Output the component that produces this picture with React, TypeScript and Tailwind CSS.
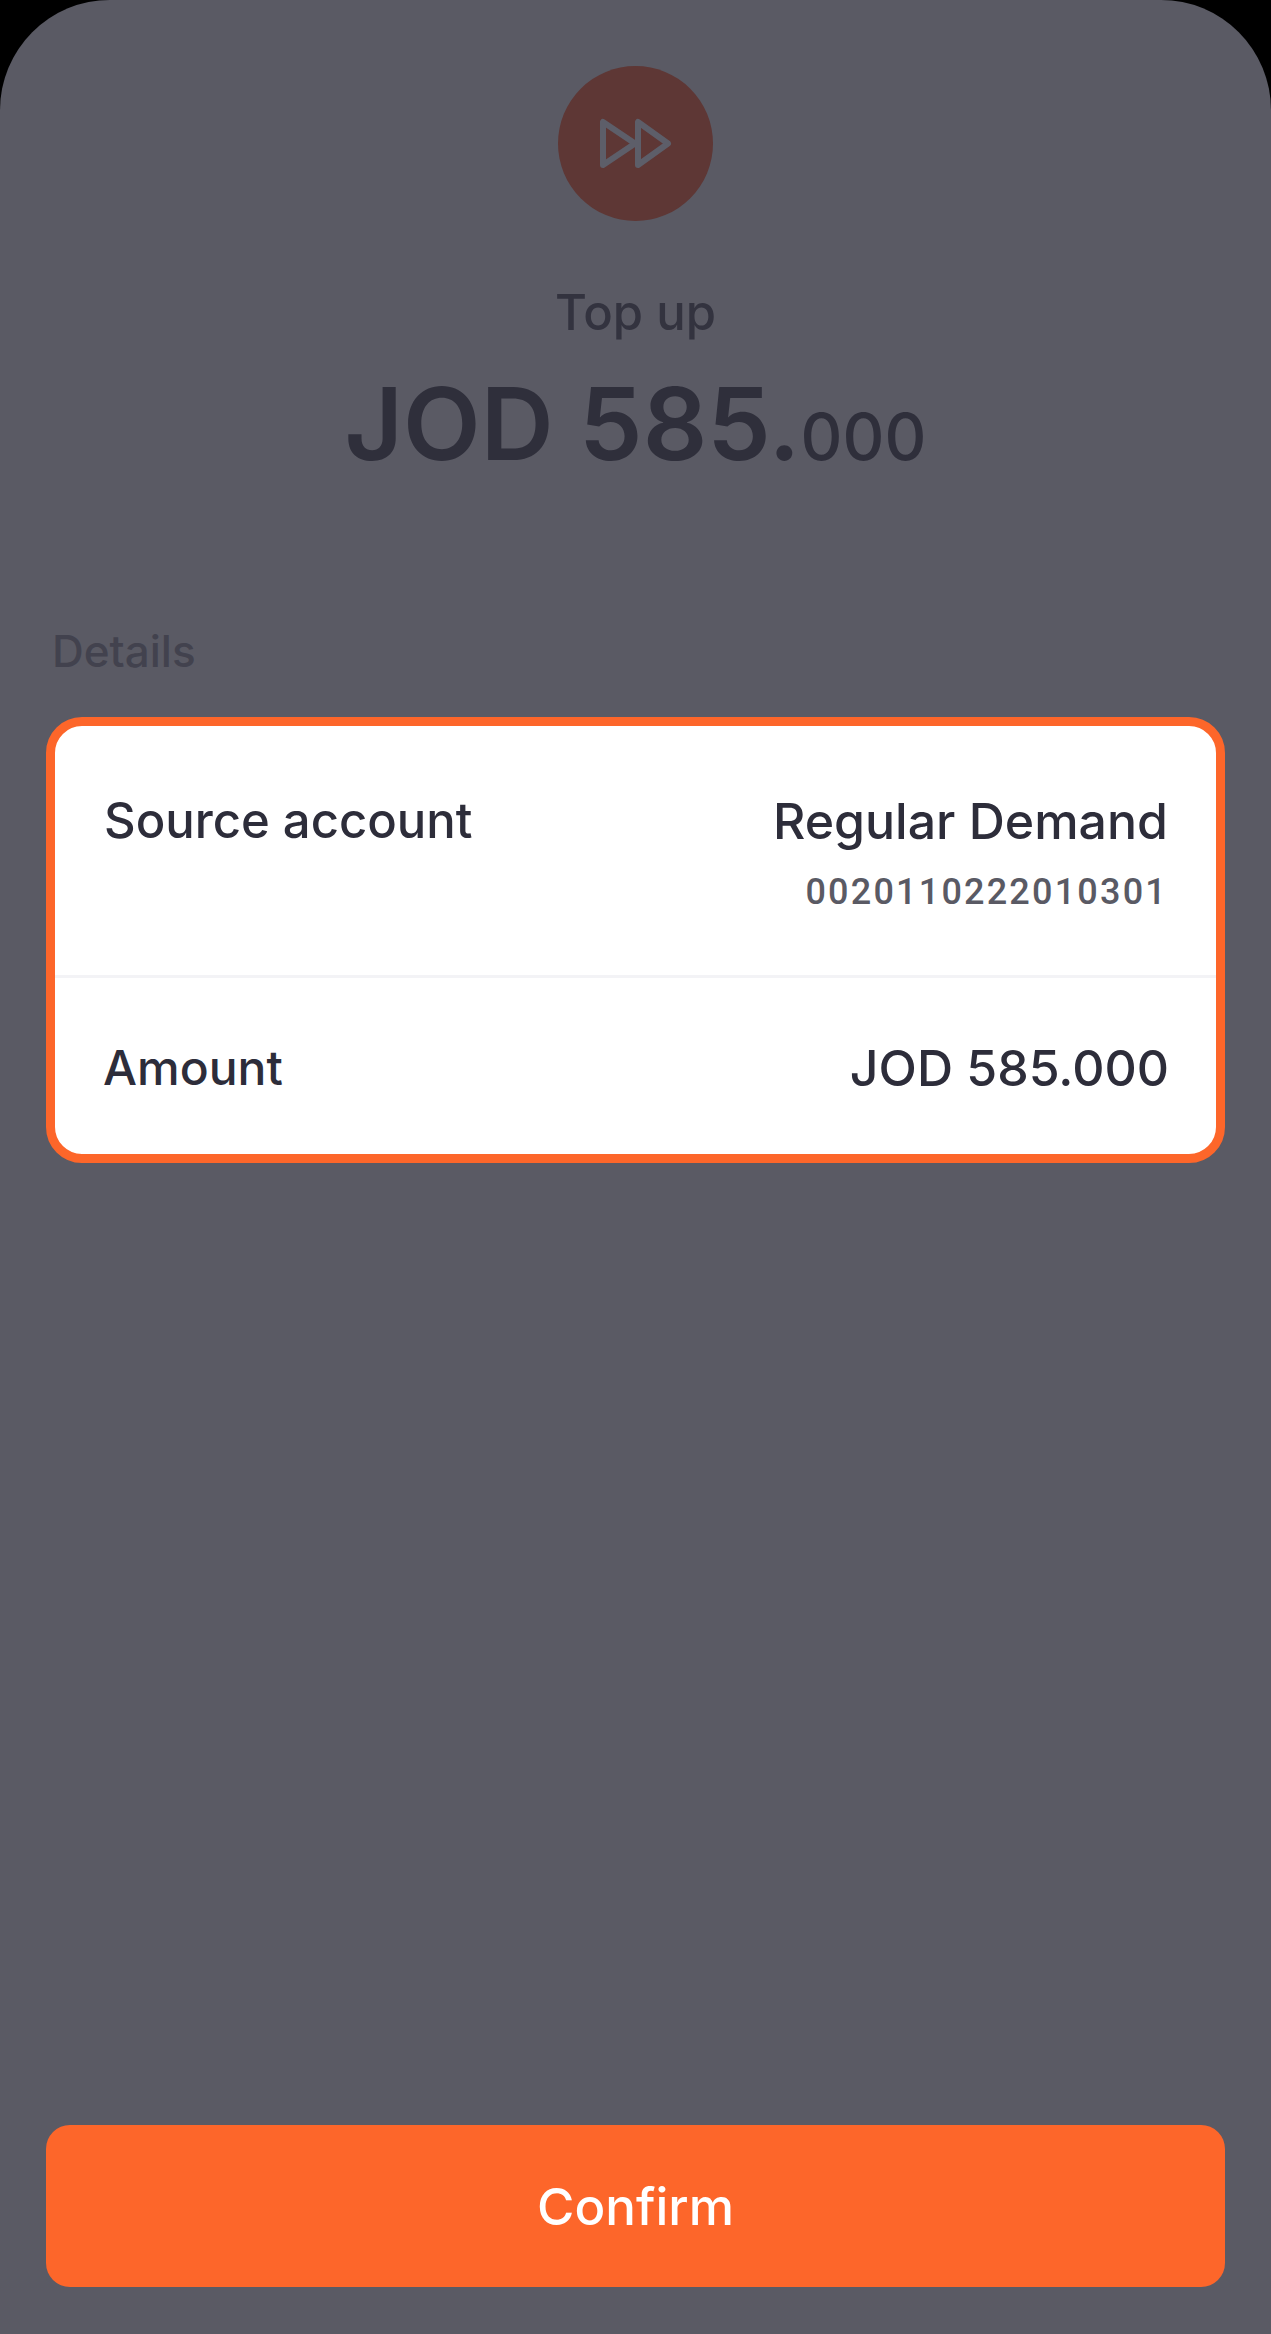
export default function App() {
  return (
    <div className="w-full h-[2334px] bg-black font-['Inter','Liberation_Sans',sans-serif]">
      <div className="h-full flex flex-col rounded-t-[110px] bg-[#5a5a64] px-[46px] pb-[47px] pt-[66px] text-[#2d2d3a]">
        <div className="flex flex-col items-center">
          <div className="flex h-[155px] w-[155px] items-center justify-center rounded-full bg-[#5e3735]">
            <svg width="77" height="55" viewBox="0 0 77 55" fill="none" stroke="#5d5e69" strokeWidth="6" strokeLinejoin="round">
              <path d="M6 6 L6 49 L38 27.5 Z" />
              <path d="M41 6 L41 49 L71 27.5 Z" />
            </svg>
          </div>
          <div className="mt-[62px] text-[49px] leading-[60px] font-medium text-[#33333f]">Top up</div>
          <div className="mt-[20px] h-[120px] text-[101px] leading-[120px] font-semibold text-[#2f2f3b]">
            <span>JOD 585.</span>
            <span className="text-[65px] font-medium">000</span>
          </div>
        </div>
        <div className="ml-[6px] mt-[143px] text-[44px] leading-[50px] font-medium text-[#42424e]">Details</div>
        <div className="mt-[41px] rounded-[36px] border-[9px] border-[#fd662a] bg-white">
          <div className="flex justify-between pl-[49px] pr-[48px] pt-[65px] pb-[61px] border-b-[3px] border-[#f3f3f6]">
            <div className="text-[49px] leading-[60px] font-medium">Source account</div>
            <div className="flex flex-col items-end">
              <div className="text-[50px] leading-[60px] font-medium">Regular Demand</div>
              <div className="mt-[19px] text-[36px] leading-[44px] font-medium tracking-[2.2px] text-[#5a5a64] font-['Roboto',sans-serif]">0020110222010301</div>
            </div>
          </div>
          <div className="flex justify-between pl-[48px] pr-[47px] pt-[60px] pb-[56px]">
            <div className="text-[48px] leading-[60px] font-medium">Amount</div>
            <div className="text-[50px] leading-[60px] font-medium">JOD 585.000</div>
          </div>
        </div>
        <div className="flex-1" />
        <button className="flex h-[162px] items-center justify-center rounded-[24px] bg-[#fd662a] pt-[3px] text-[51px] font-medium text-white">
          Confirm
        </button>
      </div>
    </div>
  );
}
